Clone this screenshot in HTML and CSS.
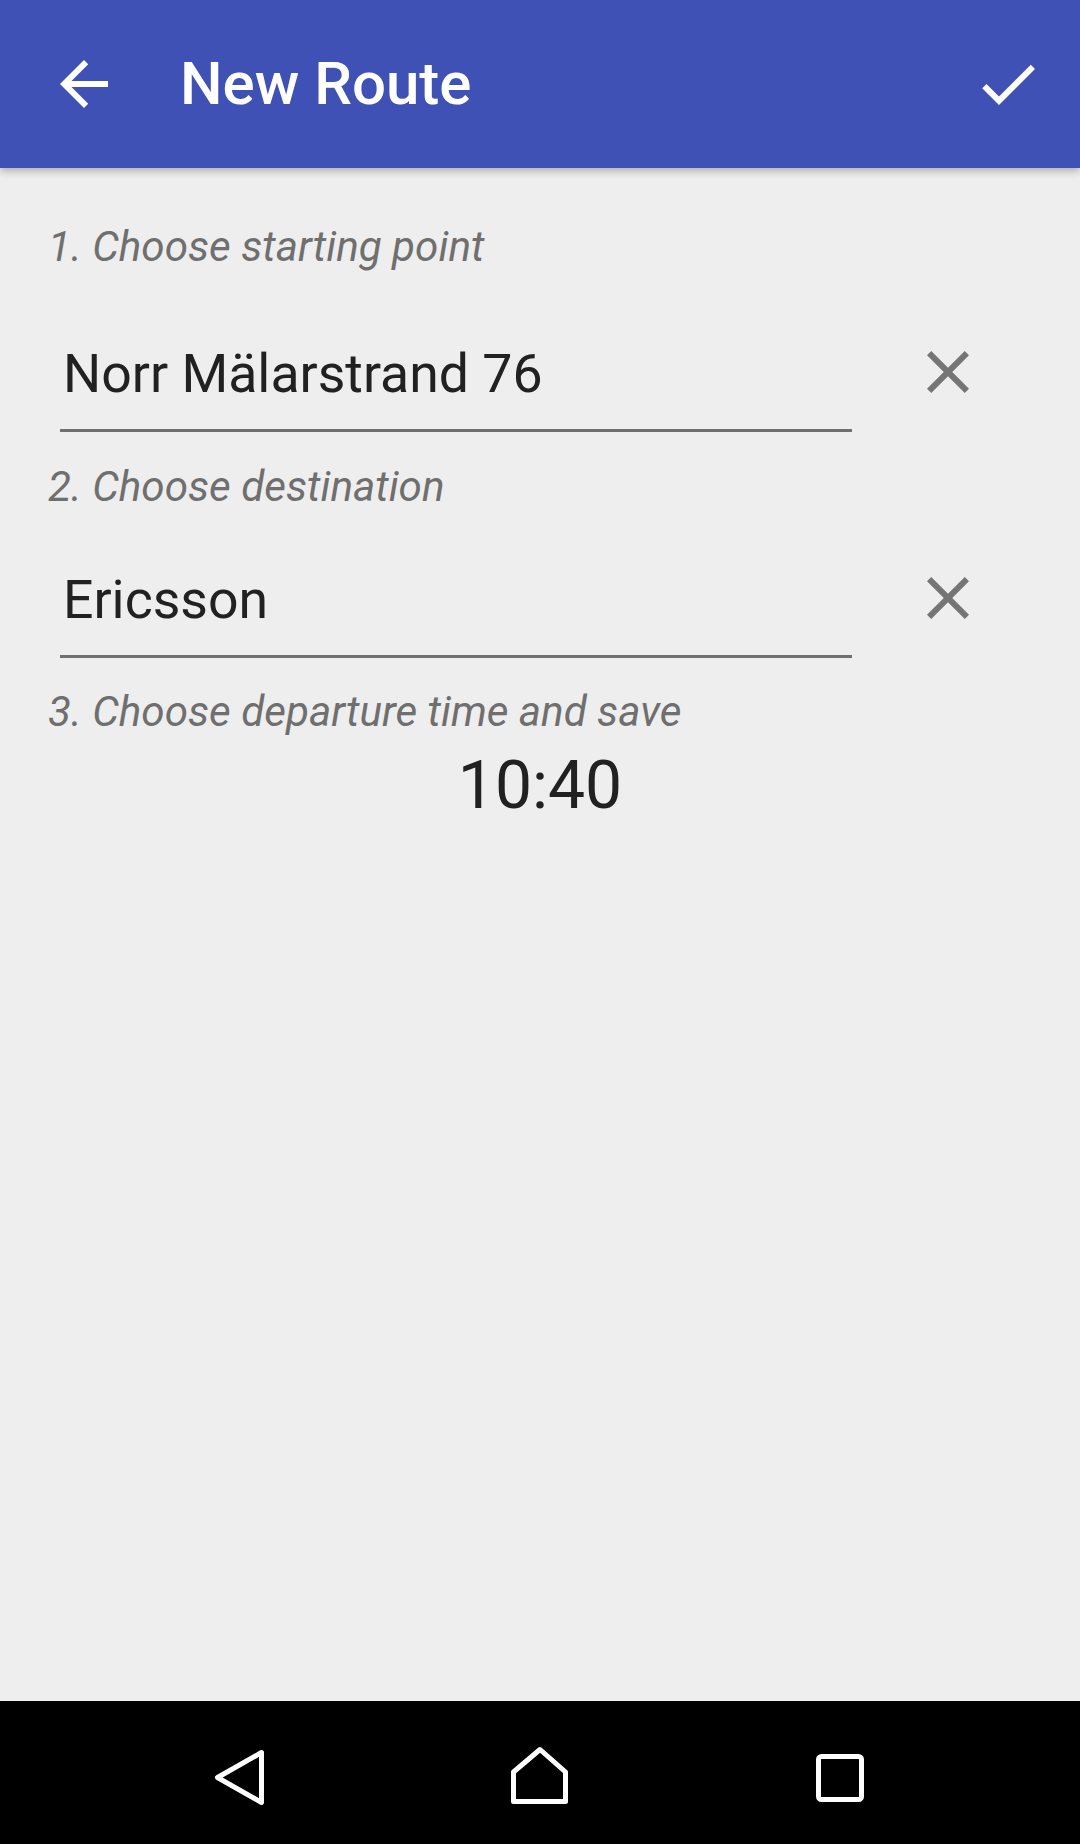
FILE: index.html
```html
<!DOCTYPE html>
<html lang="en">
<head>
<meta charset="utf-8">
<title>New Route</title>
<link rel="stylesheet" href="styles.css">
</head>
<body>
<div class="screen">
  <header class="toolbar">
    <button class="tb-btn back" aria-label="Back">
      <svg viewBox="0 0 24 24" width="72" height="72"><path fill="#fff" d="M20 11H7.83l5.59-5.59L12 4l-8 8 8 8 1.41-1.41L7.83 13H20v-2z"/></svg>
    </button>
    <h1 class="title">New Route</h1>
    <button class="tb-btn save" aria-label="Save">
      <svg viewBox="0 0 24 24" width="72" height="72"><path fill="#fff" d="M9 16.17L4.83 12l-1.42 1.41L9 19 21 7l-1.41-1.41z"/></svg>
    </button>
  </header>

  <main class="content">
    <p class="step step-first">1. Choose starting point</p>
    <div class="field-row field-row-first">
      <div class="field">Norr Mälarstrand 76</div>
      <button class="clear" aria-label="Clear">
        <svg viewBox="0 0 24 24" width="72" height="72"><path fill="#757575" d="M19 6.41L17.59 5 12 10.59 6.41 5 5 6.41 10.59 12 5 17.59 6.41 19 12 13.41 17.59 19 19 17.59 13.41 12z"/></svg>
      </button>
    </div>

    <p class="step">2. Choose destination</p>
    <div class="field-row">
      <div class="field">Ericsson</div>
      <button class="clear" aria-label="Clear">
        <svg viewBox="0 0 24 24" width="72" height="72"><path fill="#757575" d="M19 6.41L17.59 5 12 10.59 6.41 5 5 6.41 10.59 12 5 17.59 6.41 19 12 13.41 17.59 19 19 17.59 13.41 12z"/></svg>
      </button>
    </div>

    <p class="step">3. Choose departure time and save</p>
    <div class="time">10:40</div>
  </main>

  <nav class="navbar">
    <svg class="nav-icon" viewBox="0 0 72 72" width="72" height="72"><path d="M57.5 11.5 L13.5 36.5 L57.5 61.5 Z" fill="none" stroke="#fff" stroke-width="5" stroke-linejoin="round"/></svg>
    <svg class="nav-icon" viewBox="0 0 72 72" width="72" height="72"><path d="M36 8.5 L61.5 31 L61.5 60.5 L9.5 60.5 L9.5 31 Z" fill="none" stroke="#fff" stroke-width="5" stroke-linejoin="round"/></svg>
    <svg class="nav-icon" viewBox="0 0 72 72" width="72" height="72"><rect x="14.5" y="15.5" width="43" height="43" rx="3" fill="none" stroke="#fff" stroke-width="5"/></svg>
  </nav>
</div>
</body>
</html>
```

FILE: styles.css
```css
* { box-sizing: border-box; }
html, body {
  margin: 0;
  padding: 0;
}
body {
  background: #eeeeee;
  font-family: Roboto, "Noto Sans", "Liberation Sans", sans-serif;
}
.screen {
  width: 1080px;
  height: 1844px;
  display: flex;
  flex-direction: column;
  overflow: hidden;
}
.toolbar {
  height: 168px;
  flex: 0 0 168px;
  background: #3f51b5;
  display: flex;
  align-items: center;
  box-shadow: 0 3px 8px rgba(0, 0, 0, 0.28);
  position: relative;
  z-index: 1;
}
.tb-btn {
  border: 0;
  padding: 0;
  background: none;
  width: 72px;
  height: 72px;
  display: block;
}
.tb-btn svg { display: block; }
.back { margin-left: 48px; }
.save { margin-left: auto; margin-right: 36px; }
.title {
  margin: 0 0 0 60px;
  color: #fff;
  font-weight: 500;
  font-size: 60px;
  line-height: 80px;
}
.content {
  flex: 1 1 auto;
  padding-left: 48px;
  display: flex;
  flex-direction: column;
}
.step {
  margin: 26.5px 0 0 0;
  font-style: italic;
  font-size: 42.2px;
  line-height: 56px;
  color: #6f6f6f;
}
.step-first { margin-top: 51px; }
.field-row {
  display: flex;
  align-items: flex-start;
  margin-top: 49px;
}
.field-row-first { margin-top: 63px; }
.field {
  margin-left: 12px;
  width: 792px;
  padding-left: 3px;
  font-size: 53.6px;
  line-height: 72px;
  color: #212121;
  padding-bottom: 19px;
  border-bottom: 3px solid #707070;
}
.clear {
  border: 0;
  padding: 0;
  background: none;
  width: 72px;
  height: 72px;
  margin-left: 60px;
  margin-top: -2px;
}
.clear svg { display: block; }
.time {
  margin-top: 6px;
  margin-left: -48px;
  text-align: center;
  font-size: 66px;
  line-height: 80px;
  color: #212121;
}
.navbar {
  flex: 0 0 143px;
  background: #000;
  display: flex;
  justify-content: center;
  align-items: flex-start;
  padding-top: 40px;
  gap: 228px;
}
.nav-icon { display: block; }
```
